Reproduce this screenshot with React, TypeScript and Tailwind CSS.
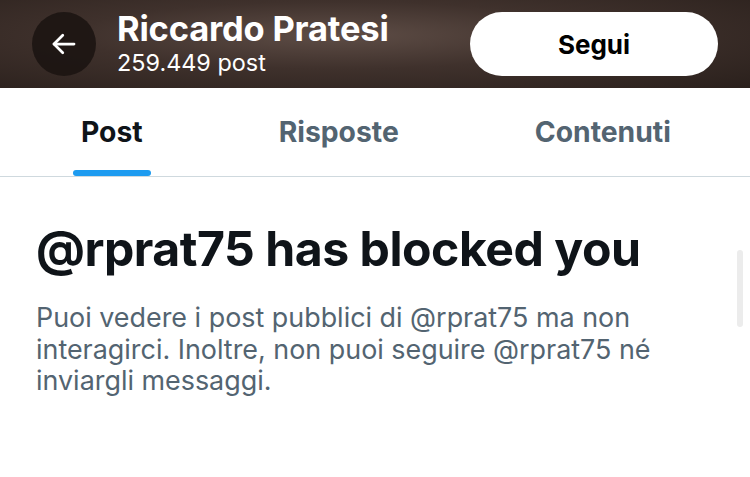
import React from "react";

function BackArrow() {
  return (
    <svg viewBox="0 0 24 24" className="w-[30px] h-[30px]" fill="none" stroke="white" strokeWidth="2.2" strokeLinecap="round" strokeLinejoin="round">
      <path d="M20 12H4" />
      <path d="M11 5l-7 7 7 7" />
    </svg>
  );
}

const tabs = ["Post", "Risposte", "Contenuti"];

export default function App() {
  return (
    <div className="w-[750px] h-[477px] bg-white overflow-hidden relative" style={{ fontFamily: "Inter, Roboto, 'Liberation Sans', sans-serif" }}>
      {/* header */}
      <div className="h-[88px] flex items-center pl-[32px] pr-[32px] bg-[radial-gradient(ellipse_at_45%_40%,#5e4d46_0%,#3f312c_45%,#2a201c_100%)]">
        <div className="w-[64px] h-[64px] rounded-full bg-[#1a1311]/85 flex items-center justify-center">
          <BackArrow />
        </div>
        <div className="ml-[21px] flex flex-col flex-1 -mt-[4px]">
          <div className="text-white font-bold text-[34.5px] leading-[42px] tracking-[-0.2px]">Riccardo Pratesi</div>
          <div className="text-white text-[23.4px] leading-[26px]">259.449 post</div>
        </div>
        <button className="w-[248px] h-[64px] rounded-full bg-white text-black font-bold text-[26px]">Segui</button>
      </div>

      {/* tabs */}
      <div className="h-[89px] flex pl-[13px] border-b border-[#cfd9de]">
        {tabs.map((t, i) => (
          <div key={t} className="relative px-[68px] flex items-center">
            <span className={"text-[28.3px] font-bold " + (i === 0 ? "text-[#0f1419]" : "text-[#536471]")}>{t}</span>
            {i === 0 && <div className="absolute bottom-0 left-[60px] right-[60px] h-[6px] rounded-full bg-[#1d9bf0]" />}
          </div>
        ))}
      </div>

      {/* body */}
      <div className="px-[36px] pt-[41px]">
        <h1 className="text-[#0f1419] font-bold text-[48.2px] leading-[62px] tracking-[-0.5px]">@rprat75 has blocked you</h1>
        <p className="mt-[22px] text-[#536471] text-[26.9px] leading-[31.5px] w-[650px]">
          Puoi vedere i post pubblici di @rprat75 ma non interagirci. Inoltre, non puoi seguire @rprat75 né inviargli messaggi.
        </p>
      </div>

      <div className="absolute right-[7px] top-[250px] w-[6px] h-[77px] rounded-full bg-[#ececec]" />
    </div>
  );
}
